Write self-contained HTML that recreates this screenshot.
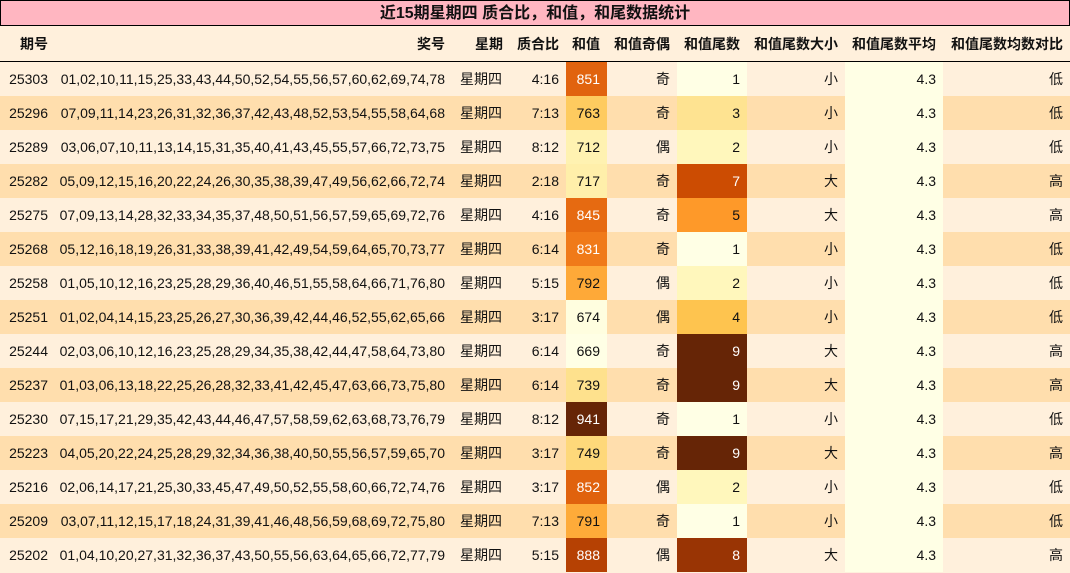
<!DOCTYPE html>
<html><head><meta charset="utf-8"><style>
html,body{margin:0;padding:0;background:#fff0dc;}
body{width:1070px;height:573px;overflow:hidden;font-family:"Liberation Sans","Noto Sans CJK SC",sans-serif;font-size:14px;color:#111;}
.title{height:24px;background:#ffb6c1;border:1px solid #000;text-align:center;font-weight:bold;font-size:16px;line-height:25px;}
table{border-collapse:collapse;table-layout:fixed;width:1070px;}
td,th{padding:0 7px 0 0;text-align:right;white-space:nowrap;overflow:hidden;height:34px;}
th{height:35px;font-weight:bold;background:#fff0dc;border-bottom:1px solid #000;}
tr.a td{background:#fff0dc;}
tr.b td{background:#ffdead;}
td.avg{background:#ffffe5 !important;}
td.wk{text-align:left;padding-left:8px;}
</style></head><body>
<div class="title">近15期星期四 质合比，和值，和尾数据统计</div>
<table>
<colgroup><col style="width:55px"><col style="width:397px"><col style="width:58px"><col style="width:56px"><col style="width:41px"><col style="width:70px"><col style="width:70px"><col style="width:98px"><col style="width:98px"><col style="width:127px"></colgroup>
<tr><th>期号</th><th>奖号</th><th>星期</th><th>质合比</th><th>和值</th><th>和值奇偶</th><th>和值尾数</th><th>和值尾数大小</th><th>和值尾数平均</th><th>和值尾数均数对比</th></tr>
<tbody id="tb"></tbody>
</table>
<script>
var d=[
["25303","01,02,10,11,15,25,33,43,44,50,52,54,55,56,57,60,62,69,74,78","4:16",851,"奇",1,"小","低"],
["25296","07,09,11,14,23,26,31,32,36,37,42,43,48,52,53,54,55,58,64,68","7:13",763,"奇",3,"小","低"],
["25289","03,06,07,10,11,13,14,15,31,35,40,41,43,45,55,57,66,72,73,75","8:12",712,"偶",2,"小","低"],
["25282","05,09,12,15,16,20,22,24,26,30,35,38,39,47,49,56,62,66,72,74","2:18",717,"奇",7,"大","高"],
["25275","07,09,13,14,28,32,33,34,35,37,48,50,51,56,57,59,65,69,72,76","4:16",845,"奇",5,"大","高"],
["25268","05,12,16,18,19,26,31,33,38,39,41,42,49,54,59,64,65,70,73,77","6:14",831,"奇",1,"小","低"],
["25258","01,05,10,12,16,23,25,28,29,36,40,46,51,55,58,64,66,71,76,80","5:15",792,"偶",2,"小","低"],
["25251","01,02,04,14,15,23,25,26,27,30,36,39,42,44,46,52,55,62,65,66","3:17",674,"偶",4,"小","低"],
["25244","02,03,06,10,12,16,23,25,28,29,34,35,38,42,44,47,58,64,73,80","6:14",669,"奇",9,"大","高"],
["25237","01,03,06,13,18,22,25,26,28,32,33,41,42,45,47,63,66,73,75,80","6:14",739,"奇",9,"大","高"],
["25230","07,15,17,21,29,35,42,43,44,46,47,57,58,59,62,63,68,73,76,79","8:12",941,"奇",1,"小","低"],
["25223","04,05,20,22,24,25,28,29,32,34,36,38,40,50,55,56,57,59,65,70","3:17",749,"奇",9,"大","高"],
["25216","02,06,14,17,21,25,30,33,45,47,49,50,52,55,58,60,66,72,74,76","3:17",852,"偶",2,"小","低"],
["25209","03,07,11,12,15,17,18,24,31,39,41,46,48,56,59,68,69,72,75,80","7:13",791,"奇",1,"小","低"],
["25202","01,04,10,20,27,31,32,36,37,43,50,55,56,63,64,65,66,72,77,79","5:15",888,"偶",8,"大","高"]];
var stops=[[255,255,229],[255,247,188],[254,227,145],[254,196,79],[254,153,41],[236,112,20],[204,76,2],[153,52,4],[102,37,6]];
function cm(t){t=Math.max(0,Math.min(1,t));var p=t*8,i=Math.min(7,Math.floor(p)),f=p-i,a=stops[i],b=stops[i+1];
return "rgb("+a.map(function(v,k){return Math.round(v+(b[k]-v)*f)}).join(",")+")";}
var h="";d.forEach(function(r,i){
var sc=cm((r[3]-669)/(941-669)),tc=cm((r[5]-1)/8);
h+='<tr class="'+(i%2?'b':'a')+'"><td>'+r[0]+'</td><td>'+r[1]+'</td><td class="wk">星期四</td><td>'+r[2]+
'</td><td style="background:'+sc+';color:'+(r[3]>=820?'#fff':'#111')+'">'+r[3]+'</td><td>'+r[4]+
'</td><td style="background:'+tc+';color:'+(r[5]>=7?'#fff':'#111')+'">'+r[5]+'</td><td>'+r[6]+
'</td><td class="avg">4.3</td><td>'+r[7]+'</td></tr>';});
document.getElementById("tb").innerHTML=h;
</script>
</body></html>
